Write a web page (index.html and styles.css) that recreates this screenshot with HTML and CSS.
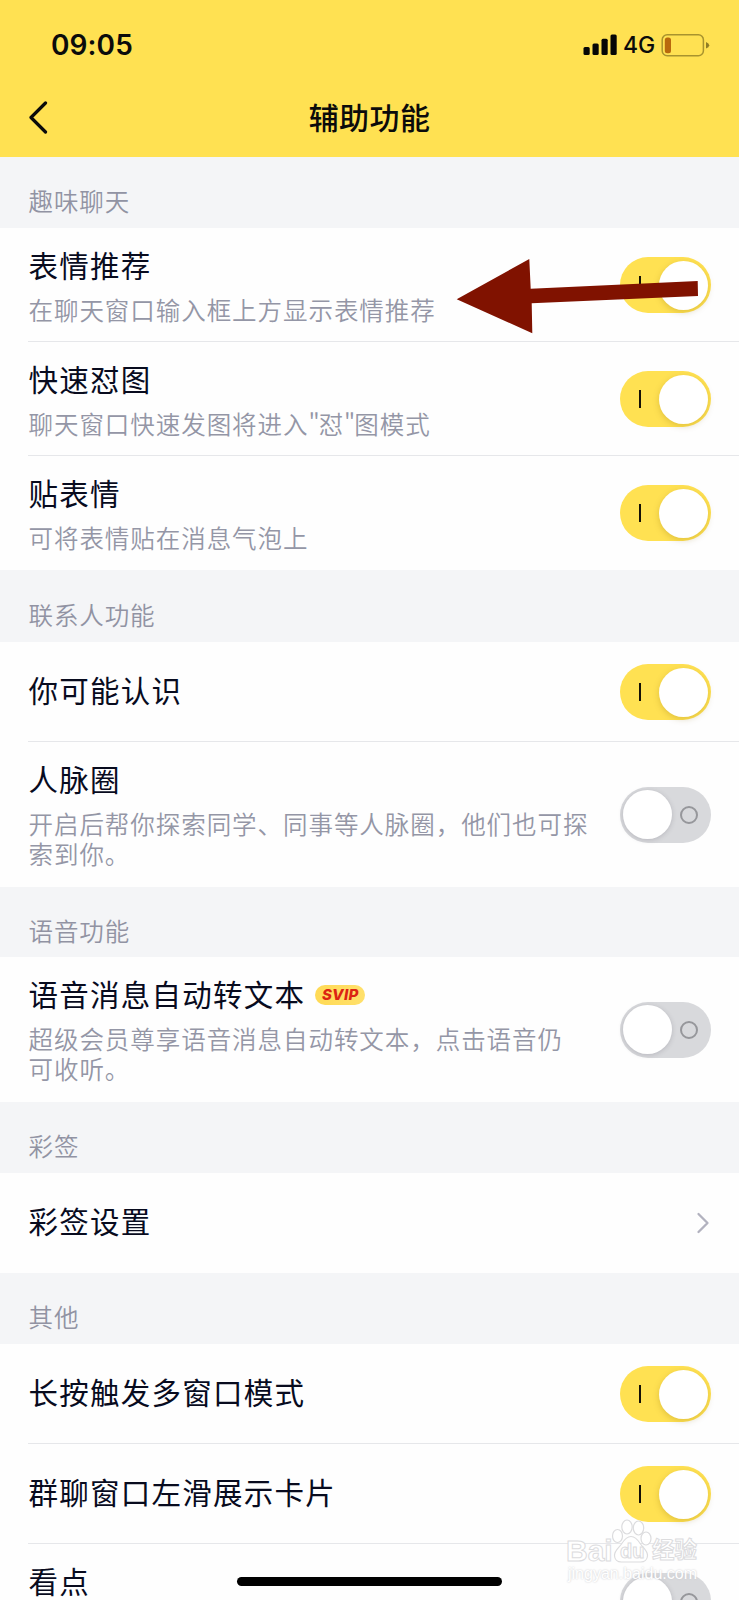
FILE: index.html
```html
<!DOCTYPE html>
<html lang="zh-CN">
<head>
<meta charset="utf-8">
<title>辅助功能</title>
<link rel="stylesheet" href="styles.css">
</head>
<body>
<div class="phone">
  <header class="header">
    <div class="status">
      <span class="time">09:05</span>
      <div class="indicators">
        <svg class="signal" width="34" height="22" viewBox="0 0 34 22"><rect x="0.5" y="13" width="6.2" height="8" rx="1.5"/><rect x="9.5" y="9.5" width="6.2" height="11.5" rx="1.5"/><rect x="18.5" y="4.7" width="6.2" height="16.3" rx="1.5"/><rect x="27.5" y="0.5" width="6.2" height="20.5" rx="1.5"/></svg>
        <span class="network">4G</span>
        <svg class="battery" width="49" height="24" viewBox="0 0 49 24"><rect x="1.2" y="1.7" width="41.2" height="21" rx="5" fill="none" stroke="#a8932e" stroke-width="1.5"/><rect x="3.8" y="4.6" width="6.2" height="15.6" rx="2.5" fill="#b9690d"/><path d="M45 9q3.2 1.2 3.2 3.3t-3.2 3.3z" fill="#8f7c25"/></svg>
      </div>
    </div>
    <div class="nav">
      <svg class="back" width="20" height="34" viewBox="0 0 20 34"><path d="M16.500 3 2 17.500l14.500 14.500"/></svg>
      <h1>辅助功能</h1>
    </div>
  </header>

  <h2 class="section">趣味聊天</h2>
  <div class="row double"><div class="copy"><div class="title">表情推荐</div><div class="sub">在聊天窗口输入框上方显示表情推荐</div></div><i class="switch on"></i></div>
  <div class="row double"><div class="copy"><div class="title">快速怼图</div><div class="sub">聊天窗口快速发图将进入<span class="quote">"</span>怼<span class="quote">"</span>图模式</div></div><i class="switch on"></i></div>
  <div class="row double last"><div class="copy"><div class="title">贴表情</div><div class="sub">可将表情贴在消息气泡上</div></div><i class="switch on"></i></div>

  <h2 class="section tall">联系人功能</h2>
  <div class="row"><div class="title">你可能认识</div><i class="switch on"></i></div>
  <div class="row triple last"><div class="copy"><div class="title">人脉圈</div><div class="sub">开启后帮你探索同学、同事等人脉圈，他们也可探<br>索到你。</div></div><i class="switch"></i></div>

  <h2 class="section short">语音功能</h2>
  <div class="row triple last"><div class="copy"><div class="title">语音消息自动转文本<span class="svip">SVIP</span></div><div class="sub">超级会员尊享语音消息自动转文本，点击语音仍<br>可收听。</div></div><i class="switch"></i></div>

  <h2 class="section">彩签</h2>
  <div class="row last"><div class="title">彩签设置</div><svg class="more" width="14" height="22" viewBox="0 0 14 22"><path d="M2.5 2 11.5 11l-9 9"/></svg></div>

  <h2 class="section">其他</h2>
  <div class="row"><div class="title">长按触发多窗口模式</div><i class="switch on"></i></div>
  <div class="row"><div class="title">群聊窗口左滑展示卡片</div><i class="switch on"></i></div>
  <div class="row double last"><div class="copy"><div class="title">看点</div></div><i class="switch"></i></div>

  <svg class="arrow" width="244" height="78" viewBox="0 0 244 78"><path d="M.7 42.3 73.3 2l1.4 29.7 167-7.7.3 15-166.3 7.3.6 30z"/></svg>

  <div class="watermark">
    <svg class="paw" width="42" height="46" viewBox="0 0 42 46"><ellipse cx="7.5" cy="17" rx="5" ry="6.5"/><ellipse cx="17" cy="8" rx="5.2" ry="7"/><ellipse cx="28.5" cy="9" rx="5.2" ry="7"/><ellipse cx="36" cy="19.500" rx="5" ry="6.500"/><path d="M21 17.500c-4.500 0-7 3.500-9.500 7.500-3 4.200-7 6.500-7 11.500 0 4 3 6.500 7 6.500h19c4 0 7-2.500 7-6.500 0-5-4-7.300-7-11.500-2.500-4-5-7.500-9.500-7.500z"/></svg>
    <span class="wm-text bai">Bai</span><span class="wm-text du">du</span><span class="wm-text jing">经验</span>
    <span class="wm-url">jingyan.baidu.com</span>
  </div>
  <div class="home"></div>
</div>
</body>
</html>
```

FILE: styles.css
```css
*, *::before, *::after { box-sizing: border-box; }
body { margin: 0; background: #fff; }
.phone {
  position: relative;
  width: 739px;
  height: 1600px;
  overflow: hidden;
  background: #fefefe;
  font-family: "Noto Sans CJK SC", sans-serif;
  color: #080b1e;
}
.header { height: 157px; background: #ffe152; color: #0b0b0b; }
.status {
  display: flex;
  justify-content: space-between;
  align-items: center;
  height: 88px;
  padding: 0 29px 0 51px;
}
.time { padding-top: 2px; font: 600 28px/1 Inter, sans-serif; letter-spacing: .1px; }
.indicators { display: flex; align-items: center; padding-top: 1px; }
.signal { fill: #060606; margin-right: 6px; }
.network { font: 500 23px/24px Inter, sans-serif; width: 33px; margin-right: 5px; }
.nav {
  display: grid;
  grid-template-columns: 1fr auto 1fr;
  align-items: center;
  height: 58px;
  padding: 0 29px;
}
.back { fill: none; stroke: #0b0b0b; stroke-width: 3.200; stroke-linecap: round; stroke-linejoin: round; }
h1 { margin: 0; padding-bottom: 2px; font-size: 30px; font-weight: 500; line-height: 40px; letter-spacing: .4px; }
.section {
  height: 71px;
  margin: 0;
  padding: 29px 0 0 28.500px;
  background: #f4f5f7;
  color: #9193a3;
  font-size: 24.500px;
  font-weight: 350;
  line-height: 30px;
  letter-spacing: .9px;
}
.tall { height: 72px; padding-top: 30px; }
.short { height: 70px; }
.row {
  display: flex;
  align-items: center;
  justify-content: space-between;
  height: 100px;
  margin-left: 28px;
  padding: 0 28.500px 0 .5px;
  border-bottom: 1px solid #e6e7ea;
}
.row > .title { padding-bottom: 5px; }
.double { height: 114px; }
.triple { height: 145px; }
.last { border-bottom-color: transparent; }
.copy { align-self: flex-start; padding-top: 16px; }
.title {
  display: flex;
  align-items: center;
  font-size: 29.500px;
  line-height: 40px;
  letter-spacing: 1.250px;
  white-space: nowrap;
}
.sub {
  margin-top: 11px;
  color: #9496a6;
  font-size: 24.500px;
  font-weight: 350;
  line-height: 29.500px;
  letter-spacing: .95px;
  white-space: nowrap;
}
.quote { letter-spacing: -1px; }
.svip {
  width: 50px;
  height: 20px;
  margin: 3px 0 0 10px;
  border-radius: 10px;
  background: linear-gradient(90deg, #ffda55, #ffe06b);
  color: #dc2412;
  font: italic 800 15px/20px Inter, sans-serif;
  letter-spacing: .3px;
  text-align: center;
}
.switch {
  position: relative;
  flex: none;
  width: 91px;
  height: 56px;
  margin-top: 1px;
  border-radius: 28px;
  background: #d8d9dc;
}
.switch::before {
  content: "";
  position: absolute;
  left: 3px;
  top: 3.500px;
  width: 49px;
  height: 49px;
  border-radius: 50%;
  background: #fff;
  box-shadow: 0 1px 5px rgba(70, 65, 80, .22);
}
.switch::after {
  content: "";
  position: absolute;
  left: 60.500px;
  top: 19.500px;
  width: 18px;
  height: 18px;
  border: 2px solid #96979b;
  border-radius: 50%;
}
.on { background: #ffe152; }
.on::before { left: 39px; box-shadow: 0 2px 6px rgba(130, 100, 0, .25); }
.on::after { left: 19.500px; top: 19px; width: 2px; border: 0; border-radius: 0; background: #151207; }
.more { margin-right: 1px; fill: none; stroke: #b2b2bf; stroke-width: 2.300; stroke-linecap: round; stroke-linejoin: round; }
.arrow { position: absolute; left: 456px; top: 257px; fill: #801200; }
.watermark {
  position: absolute;
  left: 566px;
  top: 1519px;
  width: 140px;
  height: 66px;
  color: #fff;
  font-family: "Liberation Sans", "Noto Sans CJK SC", sans-serif;
}
.paw { position: absolute; left: 44px; top: 0; fill: #fff; stroke: #dcdcde; stroke-width: 1.200; }
.wm-text {
  position: absolute;
  top: 16px;
  font-size: 30px;
  font-weight: 700;
  line-height: 32px;
  -webkit-text-stroke: 1px #dcdcde;
}
.bai { left: 0; }
.du { left: 54px; top: 18px; font-size: 20px; line-height: 28px; }
.jing { left: 86px; font-size: 22.500px; top: 16px; }
.wm-url {
  position: absolute;
  left: 2px;
  top: 46px;
  font-size: 16px;
  line-height: 18px;
  text-shadow: 0 0 2px #c4c4c8;
}
.home {
  position: absolute;
  left: 237px;
  top: 1577px;
  width: 265px;
  height: 9px;
  border-radius: 5px;
  background: #000;
}
```
